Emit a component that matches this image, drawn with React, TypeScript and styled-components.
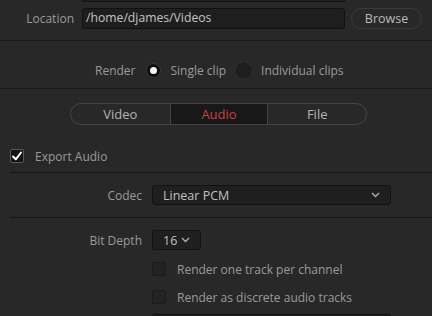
import styled, { createGlobalStyle } from "styled-components";

const GlobalStyle = createGlobalStyle`
  html, body {
    margin: 0;
    padding: 0;
    background: #282828;
  }
  body {
    font-family: "Open Sans", "Noto Sans", sans-serif;
    font-size: 12px;
    color: #9b9b9b;
    overflow: hidden;
  }
`;

const Page = styled.div`
  width: 432px;
  height: 316px;
  background: #282828;
  overflow: hidden;
`;

const TopSection = styled.div`
  padding-bottom: 11px;
  border-bottom: 1px solid #1b1b1b;
`;

const StubRow = styled.div`
  display: flex;
  padding-left: 82px;
`;

const FieldStub = styled.div`
  width: 263px;
  height: 2px;
  box-sizing: border-box;
  background: #1f1f1f;
  border: 1px solid #121212;
  border-top: none;
  border-radius: 0 0 3px 3px;
`;

const LocationRow = styled.div`
  display: flex;
  align-items: center;
  gap: 8px;
  margin-top: 6px;
  height: 21px;
`;

const Label = styled.div<{ $width: number }>`
  width: ${(p) => p.$width}px;
  text-align: right;
  color: #9a9a9a;
  font-size: 12px;
  flex-shrink: 0;
`;

const PathInput = styled.div`
  width: 263px;
  height: 21px;
  box-sizing: border-box;
  background: #1e1e1e;
  border: 1px solid #111;
  border-radius: 3px;
  color: #c4c4c4;
  font-size: 12.2px;
  line-height: 17px;
  padding-left: 3px;
`;

const BrowseButton = styled.div`
  margin-left: -2px;
  width: 71px;
  height: 21px;
  box-sizing: border-box;
  border: 1px solid #3a3a3a;
  border-radius: 11px;
  color: #b9b9b9;
  font-size: 12.5px;
  display: flex;
  align-items: center;
  justify-content: center;
`;

const RenderSection = styled.div`
  padding: 21px 0 10px;
  border-bottom: 1px solid #1b1b1b;
`;

const RadioRow = styled.div`
  display: flex;
  align-items: center;
  height: 16px;
  padding-left: 95px;
  color: #9a9a9a;
`;

const Radio = styled.span<{ $on?: boolean }>`
  width: 15px;
  height: 15px;
  box-sizing: border-box;
  border-radius: 50%;
  background: ${(p) => (p.$on ? "#0e0e0e" : "#1f1f1f")};
  border: 1px solid ${(p) => (p.$on ? "#3a3a3a" : "#191919")};
  display: flex;
  align-items: center;
  justify-content: center;
  margin: 0 10px 0 10px;

  &::after {
    content: "";
    display: ${(p) => (p.$on ? "block" : "none")};
    width: 7px;
    height: 7px;
    border-radius: 50%;
    background: #f4f4f4;
  }
`;

const Tabs = styled.div`
  display: flex;
  width: 297px;
  height: 22px;
  box-sizing: border-box;
  margin: 14px 0 0 70px;
  border: 1px solid #454545;
  border-radius: 11px;
  overflow: hidden;
`;

const Tab = styled.div<{ $active?: boolean; $w: number }>`
  width: ${(p) => p.$w}px;
  display: flex;
  align-items: center;
  justify-content: center;
  font-size: 13px;
  color: ${(p) => (p.$active ? "#c8423d" : "#b5b5b5")};
  background: ${(p) => (p.$active ? "#181818" : "transparent")};
  border-left: 1px solid #454545;

  &:first-child {
    border-left: none;
  }
`;

const CheckRow = styled.div<{ $indent: number; $top: number }>`
  display: flex;
  align-items: center;
  gap: 11px;
  height: 14px;
  margin-top: ${(p) => p.$top}px;
  padding-left: ${(p) => p.$indent}px;
  color: #9a9a9a;
`;

const Box = styled.span<{ $on?: boolean }>`
  width: 14px;
  height: 14px;
  box-sizing: border-box;
  border-radius: 2px;
  background: ${(p) => (p.$on ? "#141414" : "#232323")};
  border: 1px solid ${(p) => (p.$on ? "#5a5a5a" : "#1a1a1a")};
  display: flex;
  align-items: center;
  justify-content: center;
  flex-shrink: 0;
`;

const Divider = styled.div<{ $top: number }>`
  margin: ${(p) => p.$top}px 0 0 10px;
  height: 1px;
  background: #161616;
`;

const FieldRow = styled.div<{ $top: number }>`
  display: flex;
  align-items: center;
  gap: 10px;
  height: 20px;
  margin-top: ${(p) => p.$top}px;
`;

const Select = styled.div<{ $w: number }>`
  width: ${(p) => p.$w}px;
  height: 20px;
  box-sizing: border-box;
  background: #1f1f1f;
  border: 1px solid #121212;
  border-radius: 3px;
  display: flex;
  align-items: center;
  justify-content: space-between;
  padding: 0 10px 0 10px;
  color: #c0c0c0;
  font-size: 12.5px;
`;

const BottomStub = styled.div`
  margin: 10px 0 0 152px;
  width: 239px;
  height: 6px;
  box-sizing: border-box;
  background: #1f1f1f;
  border: 1px solid #121212;
  border-bottom: none;
  border-radius: 3px 3px 0 0;
`;

function Chevron() {
  return (
    <svg width="9" height="6" viewBox="0 0 9 6">
      <path d="M1 1 L4.5 4.5 L8 1" fill="none" stroke="#b0b0b0" strokeWidth="1.3" />
    </svg>
  );
}

function Check() {
  return (
    <svg width="12" height="12" viewBox="0 0 12 12">
      <path
        d="M2 6.5 L4.8 9.3 L10 2.5"
        fill="none"
        stroke="#ffffff"
        strokeWidth="2"
        strokeLinecap="round"
        strokeLinejoin="round"
      />
    </svg>
  );
}

export default function App() {
  return (
    <Page>
      <GlobalStyle />
      <TopSection>
        <StubRow>
          <FieldStub />
        </StubRow>
        <LocationRow>
          <Label $width={74}>Location</Label>
          <PathInput>/home/djames/Videos</PathInput>
          <BrowseButton>Browse</BrowseButton>
        </LocationRow>
      </TopSection>

      <RenderSection>
        <RadioRow>
          Render
          <Radio $on />
          Single clip
          <Radio />
          Individual clips
        </RadioRow>
      </RenderSection>

      <Tabs>
        <Tab $w={100}>Video</Tab>
        <Tab $w={98} $active>
          Audio
        </Tab>
        <Tab $w={99}>File</Tab>
      </Tabs>

      <CheckRow $indent={10} $top={24}>
        <Box $on>
          <Check />
        </Box>
        Export Audio
      </CheckRow>

      <Divider $top={9} />

      <FieldRow $top={12}>
        <Label $width={142}>Codec</Label>
        <Select $w={239}>
          Linear PCM
          <Chevron />
        </Select>
      </FieldRow>

      <Divider $top={12} />

      <FieldRow $top={12}>
        <Label $width={142}>Bit Depth</Label>
        <Select $w={49}>
          16
          <Chevron />
        </Select>
      </FieldRow>

      <CheckRow $indent={152} $top={12}>
        <Box />
        Render one track per channel
      </CheckRow>
      <CheckRow $indent={152} $top={14}>
        <Box />
        Render as discrete audio tracks
      </CheckRow>

      <BottomStub />
    </Page>
  );
}
